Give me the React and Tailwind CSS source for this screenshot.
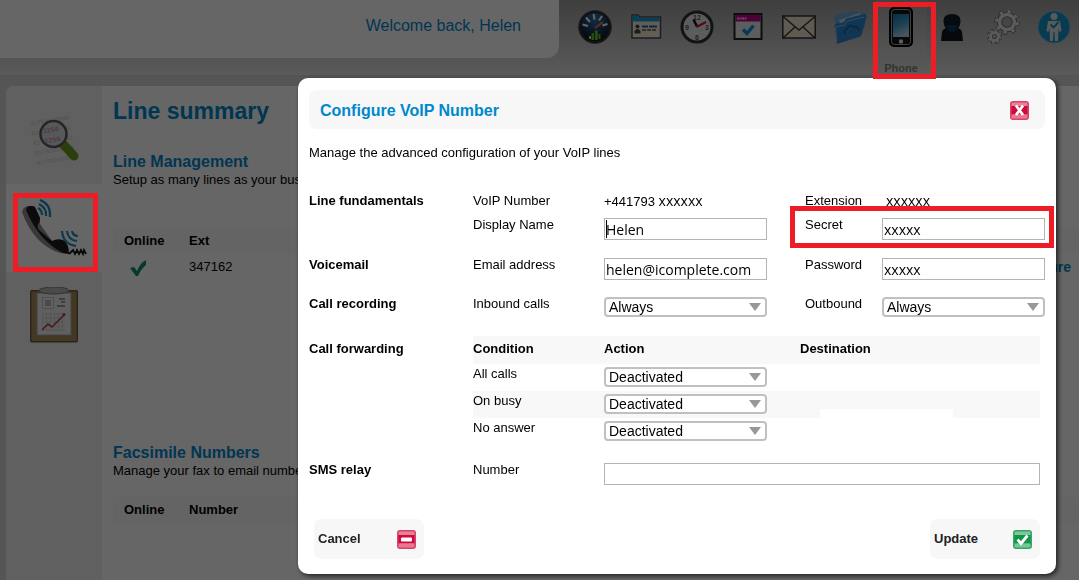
import clsx from 'clsx'

const FORWARDING = [
  { id: 'all',      label: 'All calls' },
  { id: 'busy',     label: 'On busy', striped: true },
  { id: 'noanswer', label: 'No answer' },
]

/* ---------- toolbar icons ---------- */

function DashboardIcon() {
  return (
    <svg viewBox="0 0 34 34" className="h-[34px] w-[34px]">
      <defs>
        <radialGradient id="dash" cx="0.5" cy="0.2" r="0.8">
          <stop offset="0" stopColor="#2f6fb0" />
          <stop offset="1" stopColor="#0a1020" />
        </radialGradient>
      </defs>
      <circle cx="17" cy="17" r="16.5" fill="#2c2c2c" stroke="#5c5c5c" strokeWidth="0.800" />
      <circle cx="17" cy="17" r="14" fill="url(#dash)" />
      <g stroke="#fff" strokeWidth="2">
        <path d="M4.500 14.500l5.500 1.500M8 7.500l4 4.500M15.500 4l1 5.500M24 6l-3 4.500M29.500 14l-5 1.500" />
      </g>
      <path d="M17 18L25 12" stroke="#f0703c" strokeWidth="2" />
      <g fill="#5fbf2c">
        <rect x="11" y="26" width="2" height="3" fill="#e8e040" />
        <rect x="13.500" y="23" width="2.500" height="7" />
        <rect x="16.800" y="20.500" width="3" height="9.500" />
        <rect x="20.500" y="24" width="2" height="5" />
      </g>
    </svg>
  )
}

function ContactCardIcon() {
  return (
    <svg viewBox="0 0 34 34" className="h-[34px] w-[34px]">
      <path d="M3 5h6l1.500 2H31.500v21H3z" fill="#f4ecd4" stroke="#4c4c4c" strokeWidth="1.500" />
      <path d="M3.500 6h5l1.500 2h20.700v3.500h-27.200z" fill="#0aa0e6" />
      <circle cx="8.500" cy="16.500" r="2" fill="#444" />
      <path d="M5.500 23.500v-2.500q3-4 6 0v2.500z" fill="#444" />
      <path d="M13 16.500h15" stroke="#1c5fb4" strokeWidth="1.800" strokeDasharray="6 1 8 1" />
      <path d="M13 20h14" stroke="#555" strokeWidth="1.500" strokeDasharray="4 1" />
    </svg>
  )
}

function ClockIcon() {
  return (
    <svg viewBox="0 0 34 34" className="h-[34px] w-[34px]">
      <circle cx="17" cy="17" r="15" fill="#e4e8e8" stroke="#303030" strokeWidth="3" />
      <g fontFamily="Liberation Sans, sans-serif" fontSize="7" fontWeight="bold" fill="#555" textAnchor="middle">
        <text x="17" y="9.500">12</text>
        <text x="27" y="19.500">3</text>
        <text x="17" y="29.500">6</text>
        <text x="7" y="19.500">9</text>
      </g>
      <path d="M17 16.500L13.500 9.500" stroke="#111" strokeWidth="2.500" />
      <path d="M16.500 17l9.500-5" stroke="#e01030" strokeWidth="2" />
    </svg>
  )
}

function CalendarIcon() {
  return (
    <svg viewBox="0 0 34 34" className="h-[34px] w-[34px]">
      <rect x="3.500" y="4" width="27" height="25" fill="#e6eaec" stroke="#222" strokeWidth="2" />
      <rect x="4.500" y="5" width="25" height="6.500" fill="#c4008c" />
      <path d="M6 8.500h10" stroke="#f4c4e4" strokeWidth="2" strokeDasharray="2 0.500" />
      <path d="M12 19.500l4 4 6.500-8" fill="none" stroke="#1090dc" strokeWidth="3.500" />
    </svg>
  )
}

function MailIcon() {
  return (
    <svg viewBox="0 0 34 34" className="h-[34px] w-[34px]">
      <rect x="0.800" y="6" width="32.400" height="22" fill="#eee4c8" stroke="#3a3a3a" strokeWidth="1.600" />
      <path d="M1 28l12-11M33 28L21 17M1 6.500l16 13.500L33 6.500" fill="none" stroke="#3a3a3a" strokeWidth="1.500" />
    </svg>
  )
}

function FolderIcon() {
  return (
    <svg viewBox="0 0 34 34" className="h-[34px] w-[34px]">
      <path d="M1 7l4-4 6 1 3-2 10-1 3 2 6-.5-1 14-26 15z" fill="#6ca8d8" />
      <path d="M6 10L26 3l4 4-22 8z" fill="#b8cfe4" />
      <path d="M4 34L1.500 16q0-2 2-2.500l7-1 3-4 18-4.500q2 0 2 2L29 24q-.5 2-3 3z" fill="#2e86d0" />
      <path d="M4 31L2.500 17l9-2 3-4 17-4" fill="none" stroke="#7cbcf0" />
      <path d="M12 24q-2-4 2-5 3-6 7-2 5-1 5 4" fill="none" stroke="#145ca4" strokeWidth="1.500" />
    </svg>
  )
}

function SmartphoneIcon() {
  return (
    <svg viewBox="0 0 24 40" className="h-10 w-6">
      <defs>
        <linearGradient id="screen" x1="0" y1="0" x2="0.300" y2="1">
          <stop offset="0" stopColor="#1078b0" />
          <stop offset="0.500" stopColor="#3c9ccc" />
          <stop offset="1" stopColor="#b4d0e4" />
        </linearGradient>
      </defs>
      <rect x="1" y="1" width="22" height="38" rx="4" fill="#141414" stroke="#000" strokeWidth="2" />
      <rect x="2.500" y="2.500" width="19" height="35" rx="3" fill="none" stroke="#a0a0a0" />
      <rect x="4" y="7" width="16" height="23" fill="url(#screen)" />
      <rect x="10" y="32.500" width="4" height="4" rx="1" fill="#e8e8e8" />
    </svg>
  )
}

function PersonIcon() {
  return (
    <svg viewBox="0 0 34 34" className="h-[34px] w-[34px]">
      <path d="M6 31l1-9q1-4 6-4h8q5 0 6 4l1 9z" fill="#10161e" />
      <path d="M8.500 11q0-7 8.500-7t8.500 7q0 5-3.500 9-5 4-10 0-3.500-4-3.500-9z" fill="#101c28" />
      <path d="M11 15h12q0 3-3 6-3 2-6 0-3-3-3-6z" fill="#0c3450" />
    </svg>
  )
}

function GearsIcon() {
  return (
    <svg viewBox="0 0 34 34" className="h-[34px] w-[34px]" fill="none">
      <g stroke="#6c6c6c">
        <circle cx="21" cy="12" r="7.5" strokeWidth="5.500" />
        <circle cx="21" cy="12" r="11" strokeWidth="3.500" strokeDasharray="4.400 4.240" strokeDashoffset="0.500" />
        <circle cx="8.500" cy="26.500" r="4" strokeWidth="4.500" />
        <circle cx="8.500" cy="26.500" r="6.500" strokeWidth="2.500" strokeDasharray="3 2.100" />
      </g>
      <g stroke="#e4e4e4">
        <circle cx="21" cy="12" r="7.500" strokeWidth="3.500" />
        <circle cx="21" cy="12" r="10.500" strokeWidth="3" strokeDasharray="3.200 5.047" strokeDashoffset="-0.200" />
        <circle cx="8.500" cy="26.500" r="4" strokeWidth="3" />
        <circle cx="8.500" cy="26.500" r="6.200" strokeWidth="2" strokeDasharray="2.200 2.670" />
      </g>
    </svg>
  )
}

function AssistantIcon() {
  return (
    <svg viewBox="0 0 34 34" className="h-[34px] w-[34px]">
      <circle cx="17" cy="17" r="16" fill="#1494c8" stroke="#6cb8dc" strokeWidth="1" />
      <circle cx="17" cy="6.500" r="3.500" fill="#e0e0e0" />
      <path d="M11 11h12l1.500 10-2 1-1-4-.5 13h-3l-.5-9h-1l-.5 9h-3l-.5-13-1 4-2-1z" fill="#e0e0e0" />
      <path d="M13.500 14.500l3 3 5-5.500" fill="none" stroke="#1494c8" strokeWidth="2" />
    </svg>
  )
}

/* ---------- sidebar icons ---------- */

function NumberSearchIcon() {
  return (
    <svg viewBox="0 0 52 54" className="h-[54px] w-[52px]">
      <g fontFamily="Liberation Mono, monospace" fontSize="6" fill="#cacaca" transform="rotate(-9 26 27)">
        <text x="5" y="9">01793250000</text>
        <text x="5" y="19">01793250001</text>
        <text x="5" y="29">01793250002</text>
        <text x="5" y="39">01793250003</text>
        <text x="5" y="49">01793250004</text>
      </g>
      <path d="M35 31l11 12" stroke="#6f9c1c" strokeWidth="9" strokeLinecap="round" />
      <circle cx="25.500" cy="21" r="13" fill="#d4dee2" stroke="#5c5c5c" strokeWidth="2.500" />
      <g fontFamily="Liberation Mono, monospace" fontSize="7" fontWeight="bold" fill="#d090b4" transform="rotate(-9 25 21)">
        <text x="15" y="19">3250</text>
        <text x="15" y="29">3250</text>
      </g>
    </svg>
  )
}

function HandsetIcon() {
  return (
    <svg viewBox="0 0 66 60" className="h-[60px] w-[66px]">
      <path d="M1 14Q2 9 7 8l6 1 6 11 0 6 12 17 11 0 6 13-9-1Q13 47 1 14z" fill="#8c8c8c" />
      <path d="M5 12q1-4 4-4h3q2 0 3 3l4 9q0 4-2 6-1 4 1 6l13 11q5-3 11-1 6 3 6 14l-6-1Q18 43 5 12z" fill="#1c1c1c" />
      <g fill="none" stroke="#1c90bc" strokeWidth="2.200">
        <path d="M19 2q11 4 10 17M18 6q8 4 7 12M17 10q4 2 4 7" />
        <path d="M41 33q1 13 14 15M46 33q1 9 10 10M51 33q1 5 6 5" />
      </g>
      <path d="M48 56l4-4 2 4 2-4 2 4 2-4 2 4 1-4 2 4" fill="none" stroke="#181818" strokeWidth="1.800" />
    </svg>
  )
}

function ReportIcon() {
  return (
    <svg viewBox="0 0 48 56" className="h-[56px] w-12">
      <rect x="0.750" y="3.750" width="46.500" height="51" rx="1" fill="#a88c58" stroke="#6c5c40" strokeWidth="1.500" />
      <rect x="7" y="6" width="34" height="42" fill="#efefef" stroke="#a8a8a8" />
      <ellipse cx="24" cy="3.500" rx="15" ry="3.500" fill="#b8b8b8" stroke="#808080" />
      <rect x="12.500" y="10.500" width="11" height="11" fill="none" stroke="#c4c4c4" />
      <rect x="15" y="13" width="6" height="6" fill="#b8b8b8" />
      <path d="M29 12h6M31 15h4M27 19h8" stroke="#808080" strokeWidth="1.300" />
      <path d="M12.500 26v18M16.500 26v18M20.500 26v18M24.500 26v18M28.500 26v18M32.500 26v18M12 27h23M12 31h23M12 35h23M12 39h23M12 43h23" stroke="#d4d4d4" />
      <path d="M12 43l6-6 4 3 12-12" fill="none" stroke="#c03858" strokeWidth="1.600" />
      <circle cx="34" cy="27.500" r="1.500" fill="#c03858" />
    </svg>
  )
}

/* ---------- dialog icons ---------- */

function Badge({ tone, children }) {
  const red = tone === 'red'
  return (
    <svg viewBox="0 0 19 19" className="h-[19px] w-[19px] shrink-0">
      <rect width="19" height="19" rx="3" fill={red ? '#d84468' : '#38a468'} />
      <rect x="1.500" y="1.500" width="16" height="4" rx="1.500" fill={red ? '#e88098' : '#7cc898'} />
      <rect x="1.500" y="5" width="16" height="8" fill={red ? '#cc0c3c' : '#109448'} />
      <rect x="1.500" y="13.500" width="16" height="4" rx="1.500" fill={red ? '#e87890' : '#74c894'} />
      {children}
    </svg>
  )
}

const NAV = [
  { label: 'Dashboard', icon: DashboardIcon },
  { label: 'Contacts',  icon: ContactCardIcon },
  { label: 'Clock',     icon: ClockIcon },
  { label: 'Calendar',  icon: CalendarIcon },
  { label: 'Mail',      icon: MailIcon },
  { label: 'Files',     icon: FolderIcon },
  { label: 'Phone',     icon: SmartphoneIcon, active: true },
  { label: 'Profile',   icon: PersonIcon },
  { label: 'Settings',  icon: GearsIcon },
  { label: 'Assistant', icon: AssistantIcon },
]

/* ---------- form parts ---------- */

const ROW = 'grid grid-cols-[164px_131px_1fr_38px_77px_1fr] items-start leading-[14px]'

function TextField({ id, value = '', caret }) {
  return (
    <div className="relative">
      <input
        id={id}
        type="text"
        defaultValue={value}
        className="block h-[22px] w-full border border-[#b4b4b4] bg-white px-px font-['Open_Sans'] text-[14px] text-black outline-none"
      />
      {caret && <span className="absolute top-[2px] left-[2px] h-[18px] w-px bg-black" />}
    </div>
  )
}

function Select({ id, options }) {
  return (
    <div className="relative">
      <select
        id={id}
        className="block h-5 w-full appearance-none rounded border-2 border-[#c0c0c0] bg-white pl-[3px] text-[14px] leading-4 text-black"
      >
        {options.map(o => <option key={o}>{o}</option>)}
      </select>
      <svg viewBox="0 0 12 8" className="pointer-events-none absolute top-[6px] right-[6px] h-2 w-3">
        <path d="M0 0h12L6 8z" fill="#989898" />
      </svg>
    </div>
  )
}

function Header() {
  return (
    <header className="flex h-[75px] items-start bg-linear-to-b from-[#9c9c9c] to-[#e2e2e2]">
      <div className="flex h-[58px] flex-1 items-center justify-end rounded-br-xl bg-white pr-[38px] pb-[6px] text-[16px] text-[#0088cc]">
        Welcome back, Helen
      </div>
      <nav className="flex h-full gap-[17px] pr-2 pl-[19px]">
        {NAV.map(({ label, icon: Icon, active }) => (
          <button key={label} type="button" aria-label={label} className="relative flex w-[34px] flex-col items-center">
            <span className={clsx('flex h-[58px] items-center justify-center pb-[4px]', active && 'w-[51px] bg-white/10')}>
              <Icon />
            </span>
            {active && (
              <>
                <span className="mt-1 text-[11px] leading-[14px] font-bold text-[#808080]">{label}</span>
                <span className="absolute top-[2px] -right-[18px] -bottom-[4px] -left-[11px] z-50 border-[5px] border-[#ee1c24]" />
              </>
            )}
          </button>
        ))}
      </nav>
    </header>
  )
}

function Sidebar() {
  return (
    <aside className="flex w-24 shrink-0 flex-col rounded-tl-lg bg-[#f0f0f0]">
      <button type="button" aria-label="Number search" className="flex h-[98px] items-center justify-center pt-[10px]">
        <NumberSearchIcon />
      </button>
      <button type="button" aria-label="Lines" className="relative flex h-[88px] items-center justify-center bg-white">
        <HandsetIcon />
        <span className="absolute top-[9px] right-[4px] bottom-0 left-[7px] z-50 border-[5px] border-[#ee1c24]" />
      </button>
      <button type="button" aria-label="Reports" className="flex justify-center pt-[15px]">
        <ReportIcon />
      </button>
    </aside>
  )
}

function LineSummary() {
  return (
    <main className="min-w-0 flex-1 pt-[11px] pl-[11px]">
      <h1 className="text-[23px] leading-7 font-bold text-[#0088cc]">Line summary</h1>

      <section className="mt-[27px] h-[291px]">
        <h2 className="text-[16px] leading-5 font-bold text-[#0088cc]">Line Management</h2>
        <p className="leading-[16px]">Setup as many lines as your business needs</p>
        <table className="mt-10 w-full text-left">
          <thead>
            <tr className="h-[26px] bg-[#fafafa]">
              <th className="w-[76px] pl-[11px]">Online</th>
              <th>Ext</th>
              <th />
            </tr>
          </thead>
          <tbody>
            <tr className="h-[26px]">
              <td className="pl-4">
                <svg viewBox="0 0 18 17" className="h-[17px] w-[18px]">
                  <path d="M1 9l4-1 3 4Q11 4 17 1v5q-5 4-8 11H7z" fill="#109070" />
                </svg>
              </td>
              <td>347162</td>
              <td className="pr-2 text-right">
                <a href="#configure" className="text-[14px] font-bold text-[#0088cc]">Configure</a>
              </td>
            </tr>
          </tbody>
        </table>
      </section>

      <section>
        <h2 className="text-[16px] leading-5 font-bold text-[#0088cc]">Facsimile Numbers</h2>
        <p className="leading-[16px]">Manage your fax to email numbers</p>
        <table className="mt-[18px] w-full text-left">
          <thead>
            <tr className="h-[26px] bg-[#fafafa]">
              <th className="w-[76px] pl-[11px]">Online</th>
              <th>Number</th>
            </tr>
          </thead>
        </table>
      </section>
    </main>
  )
}

function ConfigureDialog() {
  return (
    <form
      role="dialog"
      aria-labelledby="dialog-title"
      className="w-full max-w-[758px] rounded-[10px] bg-white px-[11px] pt-3 pb-[15px] shadow-[2px_2px_5px_rgba(0,0,0,0.7)]"
    >
      <div className="flex h-[39px] items-center justify-between rounded-lg bg-[#f7f7f7] pt-[2px] pr-4 pl-[11px]">
        <h2 id="dialog-title" className="text-[16px] font-bold text-[#0088cc]">Configure VoIP Number</h2>
        <button type="button" aria-label="Close">
          <Badge tone="red">
            <path d="M6 4.500l7 9.500M13 4.500L6 14" stroke="#fff" strokeWidth="2.800" />
          </Badge>
        </button>
      </div>

      <p className="mt-[17px] leading-[14px]">Manage the advanced configuration of your VoIP lines</p>

      {/* Line fundamentals */}
      <div className={clsx(ROW, 'mt-[34px] h-[14px]')}>
        <h3 className="font-bold">Line fundamentals</h3>
        <span>VoIP Number</span>
        <span>+441793 <span className="font-['Open_Sans'] text-[14px]">xxxxxx</span></span>
        <span />
        <span>Extension</span>
        <span className="pl-1 font-['Open_Sans'] text-[14px]">xxxxxx</span>
      </div>
      <div className={clsx(ROW, 'mt-[10px]')}>
        <label htmlFor="display-name" className="col-start-2">Display Name</label>
        <TextField id="display-name" value="Helen" caret />
        <div className="relative col-span-2 col-start-5 grid grid-cols-subgrid">
          <label htmlFor="secret">Secret</label>
          <TextField id="secret" value="xxxxx" />
          <span className="pointer-events-none absolute -top-3 -right-[9px] -bottom-2 -left-[15px] border-[5px] border-[#ee1c24]" />
        </div>
      </div>

      {/* Voicemail */}
      <div className={clsx(ROW, 'mt-[18px]')}>
        <h3 className="font-bold">Voicemail</h3>
        <label htmlFor="email">Email address</label>
        <TextField id="email" value="helen@icomplete.com" />
        <span />
        <label htmlFor="password">Password</label>
        <TextField id="password" value="xxxxx" />
      </div>

      {/* Call recording */}
      <div className={clsx(ROW, 'mt-[17px]')}>
        <h3 className="font-bold">Call recording</h3>
        <label htmlFor="inbound">Inbound calls</label>
        <Select id="inbound" options={['Always', 'Never']} />
        <span />
        <label htmlFor="outbound">Outbound</label>
        <Select id="outbound" options={['Always', 'Never']} />
      </div>

      {/* Call forwarding */}
      <div className="mt-[19px] grid grid-cols-[164px_1fr] pr-[5px] leading-[14px]">
        <h3 className="pt-[6px] font-bold">Call forwarding</h3>
        <table className="w-full table-fixed text-left">
          <thead>
            <tr className="h-7 bg-[#f8f8f8]">
              <th className="w-[131px] pb-[2px]">Condition</th>
              <th className="w-[196px] pb-[2px]">Action</th>
              <th className="pb-[2px]">Destination</th>
            </tr>
          </thead>
          <tbody>
            {FORWARDING.map(({ id, label, striped }) => (
              <tr key={id} className={clsx('h-[27px] align-top', striped && 'bg-[#f8f8f8]')}>
                <td className="pt-[3px]"><label htmlFor={id}>{label}</label></td>
                <td className="pt-[3px] pr-[33px]">
                  <Select id={id} options={['Deactivated', 'Activated']} />
                </td>
                <td className="pl-5 align-bottom">
                  {striped && <div className="h-[9px] w-[133px] bg-white" />}
                </td>
              </tr>
            ))}
          </tbody>
        </table>
      </div>

      {/* SMS relay */}
      <div className="mt-[18px] grid grid-cols-[164px_131px_1fr] pr-[5px] leading-[14px]">
        <h3 className="font-bold">SMS relay</h3>
        <label htmlFor="sms">Number</label>
        <TextField id="sms" />
      </div>

      <div className="mt-[34px] flex justify-between px-[5px]">
        <button type="button" className="flex h-10 w-[110px] items-center justify-between rounded-lg bg-[#f7f7f7] pr-2 pl-1 font-bold text-[#222]">
          Cancel
          <Badge tone="red">
            <rect x="4" y="7.500" width="11" height="4" rx="1" fill="#fff" />
          </Badge>
        </button>
        <button type="submit" className="flex h-10 w-[110px] items-center justify-between rounded-lg bg-[#f7f7f7] pr-2 pl-1 font-bold text-[#222]">
          Update
          <Badge tone="green">
            <path d="M4.500 9.500l3.500 4 6.500-8" fill="none" stroke="#fff" strokeWidth="2.800" />
          </Badge>
        </button>
      </div>
    </form>
  )
}

export default function App() {
  return (
    <div className="flex h-screen flex-col overflow-hidden bg-[#d4d4d4] font-['Liberation_Sans',Arial,sans-serif] text-[13px] text-black">
      <Header />
      <div className="mt-[11px] ml-[6px] flex flex-1 rounded-tl-lg bg-white">
        <Sidebar />
        <LineSummary />
      </div>

      <div className="fixed inset-0 z-40 flex items-start justify-end bg-black/60 pt-[78px] pr-[23px]">
        <ConfigureDialog />
      </div>
    </div>
  )
}
